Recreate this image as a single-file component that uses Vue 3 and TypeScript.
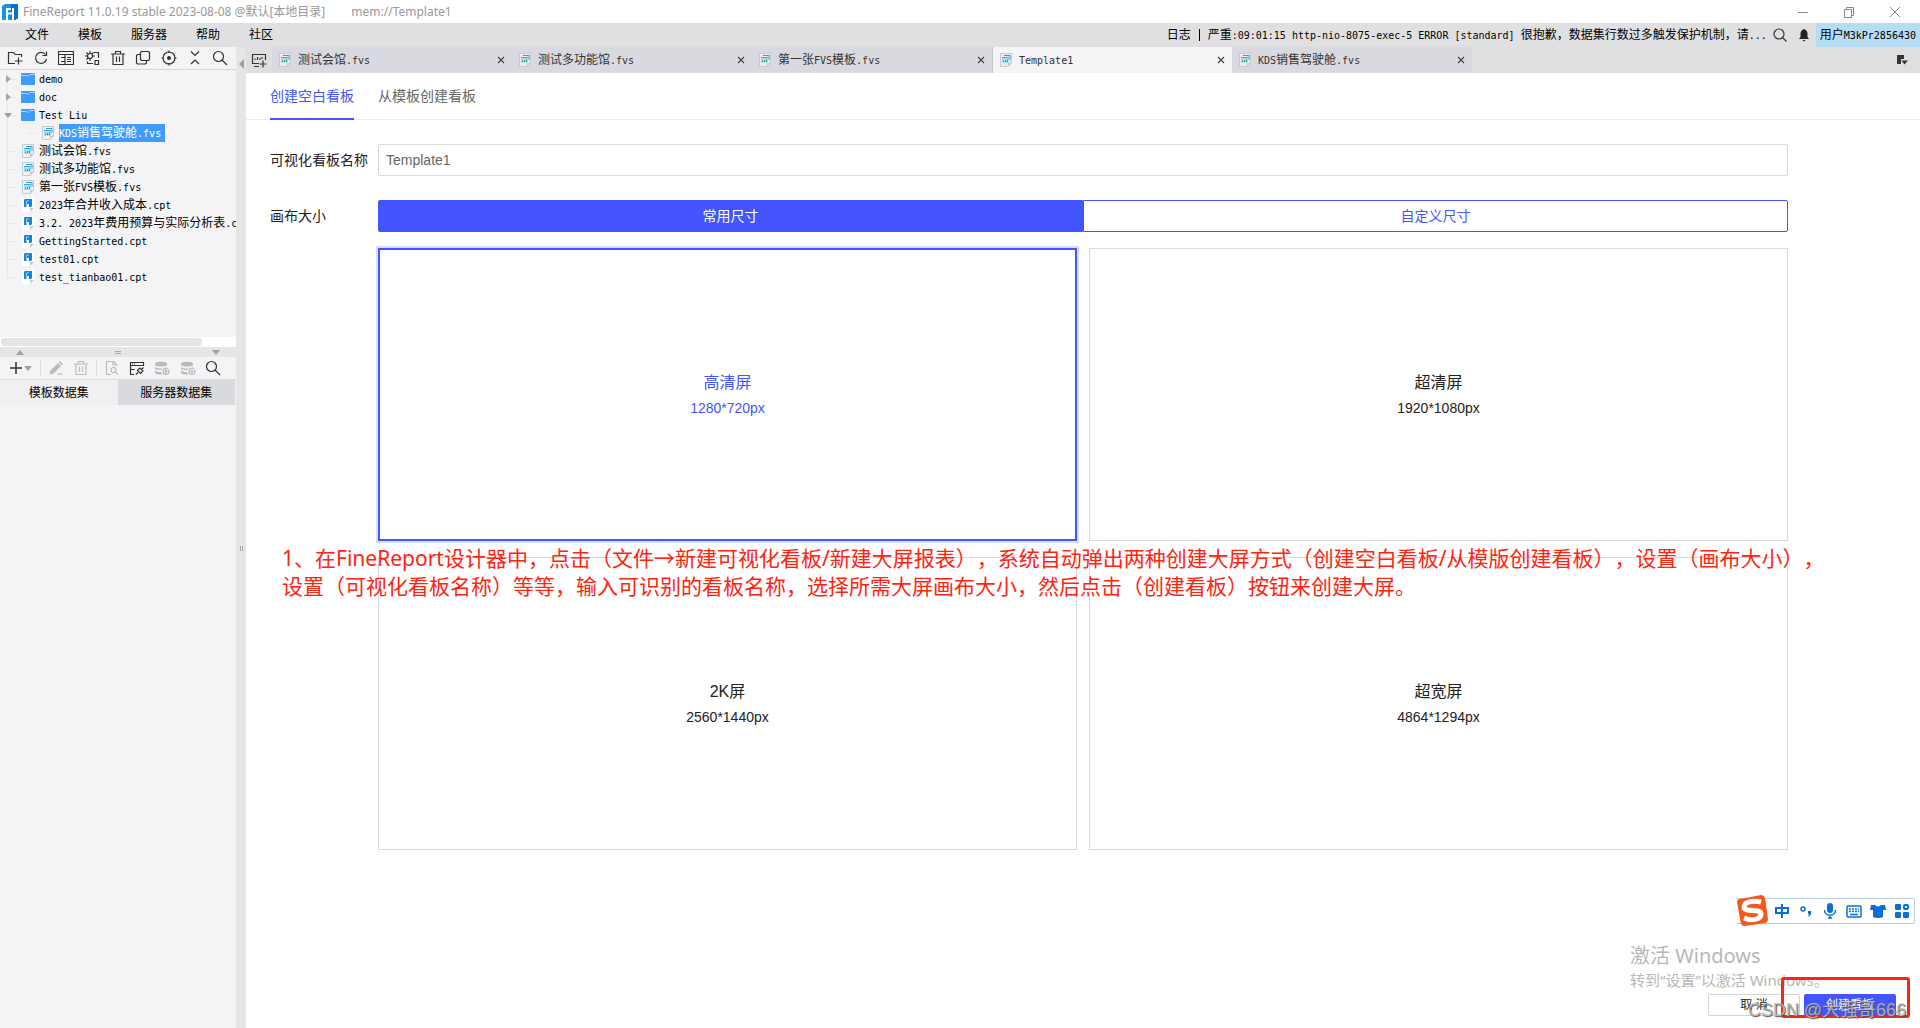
<script setup lang="ts">
import { h, ref, type FunctionalComponent } from 'vue'

// Mixed text: Latin runs are set in a monospace face half as wide as the Chinese glyphs.
const Mixed: FunctionalComponent<{ text: string }> = (props) =>
  h(
    'span',
    { class: 'mixed' },
    (props.text.match(/[\x00-\x7f]+|[^\x00-\x7f]+/g) ?? []).map((run) =>
      h('span', { class: run.charCodeAt(0) < 128 ? 'latin' : 'han' }, run),
    ),
  )
Mixed.props = ['text']

type Kind = 'folder' | 'fvs' | 'cpt'
interface Node { name: string; kind: Kind; level: number; open?: boolean }

const menus = ['文件', '模板', '服务器', '帮助', '社区']
const nodes: Node[] = [
  { name: 'demo', kind: 'folder', level: 0, open: false },
  { name: 'doc', kind: 'folder', level: 0, open: false },
  { name: 'Test Liu', kind: 'folder', level: 0, open: true },
  { name: 'KDS销售驾驶舱.fvs', kind: 'fvs', level: 1 },
  { name: '测试会馆.fvs', kind: 'fvs', level: 0 },
  { name: '测试多功能馆.fvs', kind: 'fvs', level: 0 },
  { name: '第一张FVS模板.fvs', kind: 'fvs', level: 0 },
  { name: '2023年合并收入成本.cpt', kind: 'cpt', level: 0 },
  { name: '3.2. 2023年费用预算与实际分析表.cpt', kind: 'cpt', level: 0 },
  { name: 'GettingStarted.cpt', kind: 'cpt', level: 0 },
  { name: 'test01.cpt', kind: 'cpt', level: 0 },
  { name: 'test_tianbao01.cpt', kind: 'cpt', level: 0 },
]
const selectedNode = ref('KDS销售驾驶舱.fvs')

const files = ['测试会馆.fvs', '测试多功能馆.fvs', '第一张FVS模板.fvs', 'Template1', 'KDS销售驾驶舱.fvs']
const activeFile = ref('Template1')

const boardName = ref('Template1')
const sizes = [
  { name: '高清屏', px: '1280*720px' },
  { name: '超清屏', px: '1920*1080px' },
  { name: '2K屏', px: '2560*1440px' },
  { name: '超宽屏', px: '4864*1294px' },
]
const size = ref('高清屏')

interface Tool { label: string; d: string; solid?: string; off?: boolean }

const tools: Tool[] = [
  { label: '新建文件夹', d: 'M8 13.500H1.500V2.500H6.500L8 4.500H14.500V7M11.500 7.500V14.500M8 11H15.500M8 4.500H14.500' },
  { label: '刷新', d: 'M12.500 4.500A5.500 5.500 0 1 0 13.500 9M13.500 1.500V5.500H9.500' },
  { label: '视图', d: 'M.5 1.500H15.500V14.500H.5ZM.5 4.500H15.500M3 7.500H7M3 11.500H7M7 5V14M9 7.500H13M9 9.500H13M9 11.500H13' },
  { label: '设置', d: 'M6 1V3M6 9V11M1 6H3M9 6H11M2.500 2.500L4 4M9.500 2.500L8 4M2.500 9.500L4 8M6 3.500A2.500 2.500 0 1 0 6 8.500A2.500 2.500 0 1 0 6 3.500M10 2.500H14.500V8M3.500 11.500V13.500H9M11 10.500H14.500V14.500H11Z' },
  { label: '删除', d: 'M1 4H15M5.500 4V1.500H10.500V4M3 4V14.500H13V4M6.500 6.500V12M9.500 6.500V12' },
  { label: '复制', d: 'M6.500 1.500H13.500L14.500 2.500V9.500L13.500 10.500H6.500L5.500 9.500V2.500ZM5 4.500H2.500L1.500 5.500V13L2.500 14H10.500L11.500 13V11' },
  { label: '定位', d: 'M8 2A6 6 0 1 0 8 14A6 6 0 1 0 8 2M8 .5V3M8 13V15.500M.5 8H3M13 8H15.500', solid: 'M8 6A2 2 0 1 0 8 10A2 2 0 1 0 8 6' },
  { label: '折叠', d: 'M4 1.500L8 5.500L12 1.500M4 14L8 10L12 14' },
  { label: '搜索', d: 'M6.500 1.500A5 5 0 1 0 6.500 11.500A5 5 0 1 0 6.500 1.500M10 10L15 15' },
]
const database = 'M1 3.500C1 1 13 1 13 3.500V5C13 7 1 7 1 5ZM1 7C3 9 11 9 13 7V8H9L7 10C4 10 1 9.500 1 8.500ZM1 10.500C2 11.500 5 12 7 12L8 14.500C4 14.500 1 14 1 12.500Z'
const dataTools: Tool[] = [
  { label: '编辑', off: true, solid: 'M1.500 14.500L2.500 10.500L10 3L13 6L5.500 13.500ZM10.800 2.200L12 1L15 4L13.800 5.200Z', d: 'M9 14H14.500' },
  { label: '删除数据集', off: true, d: 'M1 4H15M5.500 4V1.500H10.500V4M3 4V14.500H13V4M6.500 6.500V12M9.500 6.500V12' },
  { label: '预览', off: true, d: 'M7 14.500H2.500V1.500H9.500L12.500 4.500V6M9 1.500V5H12.500M9.500 7.500A2.500 2.500 0 1 0 9.500 12.500A2.500 2.500 0 1 0 9.500 7.500M11.500 12L14 14.500' },
  { label: '连接', d: 'M5 14.500H1.500V2.500H14.500V6M1.500 5.500H14.500M3 4H4M5 4H6M1.500 9.500H5.500M7 14.500L9 12.500M8.500 10.500L11 8L14 11L11.500 13.500ZM12.500 9.500L14.500 7.500' },
  { label: '运行', off: true, solid: database, d: 'M12 8.500A3 3 0 1 0 12 14.500A3 3 0 1 0 12 8.500M11.500 10V13L13 11.500Z' },
  { label: '停止', off: true, solid: database, d: 'M12 8.500A3 3 0 1 0 12 14.500A3 3 0 1 0 12 8.500M11 10.500L13 12.500M13 10.500L11 12.500' },
  { label: '查找', d: 'M6.500 1.500A5 5 0 1 0 6.500 11.500A5 5 0 1 0 6.500 1.500M10 10L15 15' },
]
</script>

<template>
  <div class="app">
    <header class="titlebar">
      <svg class="logo" viewBox="0 0 16 16" aria-hidden="true">
        <path d="M0 2L3 0H16V14L13 16H0Z" fill="#1593e6" />
        <path d="M9 0H16V14L13 16H9Z" fill="#0a6fc4" />
        <path d="M5 16V5H9M5 9.500H11M11 4V16" fill="none" stroke="#fff" stroke-width="2" />
      </svg>
      <span class="title">FineReport 11.0.19 stable 2023-08-08 @默认[本地目录]</span>
      <span class="title">mem://Template1</span>
      <div class="window-buttons">
        <button aria-label="最小化"><svg viewBox="0 0 12 12"><path d="M1 6.500H11" /></svg></button>
        <button aria-label="还原"><svg viewBox="0 0 12 12"><path d="M1.500 3.500H8.500V11.500H1.500ZM3.500 3V1.500H10.500V9.500H9" /></svg></button>
        <button aria-label="关闭"><svg viewBox="0 0 12 12"><path d="M1 1L11 11M11 1L1 11" /></svg></button>
      </div>
    </header>

    <div class="menubar">
      <nav class="menus">
        <button v-for="m in menus" :key="m">{{ m }}</button>
      </nav>
      <div class="status">
        <span>日志</span>
        <span class="bar"></span>
        <Mixed class="log" text="严重:09:01:15 http-nio-8075-exec-5 ERROR [standard] 很抱歉，数据集行数过多触发保护机制，请..." />
        <button class="plain" aria-label="搜索">
          <svg class="icon" viewBox="0 0 16 16"><path d="M7 2A5 5 0 1 0 7 12A5 5 0 1 0 7 2M10.500 10.500L14.500 14.500" /></svg>
        </button>
        <button class="plain" aria-label="通知">
          <svg class="icon bell" viewBox="0 0 16 16"><path d="M8 2C5 3 4.500 5 4.500 7V10L3 12H13L11.500 10V7C11.500 5 11 3 8 2ZM6.500 13H9.500L8 14.500Z" /></svg>
        </button>
        <button class="user"><Mixed text="用户M3kPr2856430" /></button>
      </div>
    </div>

    <div class="body">
      <aside class="side">
        <div class="tools">
          <button v-for="t in tools" :key="t.label" :aria-label="t.label">
            <svg class="icon" viewBox="0 0 16 16"><path v-if="t.solid" class="solid" :d="t.solid" /><path :d="t.d" /></svg>
          </button>
        </div>
        <ul class="tree">
          <li v-for="n in nodes" :key="n.name" :class="['node', { child: n.level === 1 }]">
            <span class="toggle">
              <i v-if="n.kind === 'folder'" :class="n.open ? 'caret-down' : 'caret-right'"></i>
            </span>
            <svg v-if="n.kind === 'folder'" class="folder" viewBox="0 0 14 12" aria-hidden="true">
              <path d="M0 1Q0 0 1 0H13Q14 0 14 1V11Q14 12 13 12H1Q0 12 0 11Z" fill="#409bff" />
              <path d="M0 2.500H5L7 3.500L9 1.500H14" fill="none" stroke="#a9d2ff" />
            </svg>
            <svg v-else-if="n.kind === 'fvs'" class="file" viewBox="0 0 12 14" aria-hidden="true">
              <path d="M.5 .5H11.500V10L8 13.500H.5Z" fill="#f2f3f5" stroke="#c6c9cd" />
              <path d="M4 2.500H10V7" fill="none" stroke="#2f9be0" />
              <path d="M2 4H9V10H2Z" fill="#a9dcf7" /><path d="M2 4H9V5H2Z" fill="#3fa5e6" />
              <path d="M3.500 9V7.500M5.500 9V7M7.500 9V6.500" stroke="#3aa55a" />
              <path d="M8 13.500V10H11.500Z" fill="#c6c9cd" />
            </svg>
            <svg v-else class="file" viewBox="0 0 12 14" aria-hidden="true">
              <path d="M0 0H12V10L8 14H0Z" fill="#fff" />
              <path d="M2 2L3 1H10V8L9 9H7V6H5V9H2Z" fill="#1286dd" />
              <path d="M7 3H4.500V9" fill="none" stroke="#8ed0ff" />
              <path d="M8 14V10H12Z" fill="#c9ccd0" />
            </svg>
            <button :class="['node-name', { on: selectedNode === n.name }]" @click="selectedNode = n.name">
              <Mixed :text="n.name" />
            </button>
          </li>
        </ul>
        <div class="hscroll"><div class="thumb"></div></div>
        <div class="hsplit">
          <i class="caret-up"></i><span class="grip"></span><i class="caret-down"></i>
        </div>
        <div class="tools data-tools">
          <button class="add" aria-label="新增">
            <svg class="icon" viewBox="0 0 16 16"><path d="M8 2V14M2 8H14" stroke-width="1.500" /></svg><i class="caret-down"></i>
          </button>
          <template v-for="(t, i) in dataTools" :key="t.label">
            <span v-if="i === 0 || i === 2" class="sep"></span>
            <button :aria-label="t.label" :class="{ off: t.off }">
              <svg class="icon" viewBox="0 0 16 16"><path v-if="t.solid" class="solid" :d="t.solid" /><path :d="t.d" /></svg>
            </button>
          </template>
        </div>
        <div class="data-tabs">
          <button>模板数据集</button>
          <button class="on">服务器数据集</button>
        </div>
      </aside>

      <div class="vsplit">
        <i class="caret-left"></i><span class="vgrip"></span>
      </div>

      <main class="main">
        <div class="file-tabs">
          <button class="plain new-board" aria-label="新建看板">
            <svg class="icon" viewBox="0 0 16 16"><path d="M8 11.500H1.500V2.500H14.500V8M12 8.500V15.500M8.500 12H15.500M3 14.500H8M4 8V6.500M6.500 8V5M9 8V6M11 7V5" /></svg>
          </button>
          <div v-for="f in files" :key="f" :class="['file-tab', { on: activeFile === f }]">
            <button class="file-tab-name" @click="activeFile = f">
              <svg class="file" viewBox="0 0 12 14" aria-hidden="true">
                <path d="M.5 .5H11.500V10L8 13.500H.5Z" fill="#e9ebee" stroke="#c6c9cd" />
                <path d="M4 2.500H10V7" fill="none" stroke="#2f9be0" />
                <path d="M2 4H9V10H2Z" fill="#a9dcf7" /><path d="M2 4H9V5H2Z" fill="#3fa5e6" />
                <path d="M3.500 9V7.500M5.500 9V7M7.500 9V6.500" stroke="#3aa55a" />
                <path d="M8 13.500V10H11.500Z" fill="#c6c9cd" />
              </svg>
              <Mixed :text="f" />
            </button>
            <button class="close" aria-label="关闭标签">
              <svg viewBox="0 0 8 8"><path d="M1 1L7 7M7 1L1 7" /></svg>
            </button>
          </div>
          <button class="plain more" aria-label="更多标签">
            <svg viewBox="0 0 12 12"><path d="M1 10V1H8V5H5V10Z" fill="#333" /><path d="M5.500 6.500H12L8.500 10.500Z" fill="#333" /></svg>
          </button>
        </div>

        <nav class="mode-tabs">
          <button class="on">创建空白看板</button>
          <button>从模板创建看板</button>
        </nav>

        <form class="form" @submit.prevent>
          <div class="row">
            <label for="board-name">可视化看板名称</label>
            <input id="board-name" v-model="boardName" type="text" />
          </div>
          <div class="row">
            <span id="canvas-label" class="label">画布大小</span>
            <div class="segments" role="group" aria-labelledby="canvas-label">
              <button type="button" class="on">常用尺寸</button>
              <button type="button">自定义尺寸</button>
            </div>
          </div>
          <div class="cards">
            <button v-for="s in sizes" :key="s.name" type="button" :class="['card', { on: size === s.name }]" @click="size = s.name">
              <span class="card-name">{{ s.name }}</span>
              <span class="card-px">{{ s.px }}</span>
            </button>
          </div>
        </form>

        <footer class="footer">
          <button>取 消</button>
          <button class="primary">创建看板</button>
        </footer>

        <p class="note">
          1、在FineReport设计器中，点击（文件→新建可视化看板/新建大屏报表），系统自动弹出两种创建大屏方式（创建空白看板/从模版创建看板），设置（画布大小），<br />
          设置（可视化看板名称）等等，输入可识别的看板名称，选择所需大屏画布大小，然后点击（创建看板）按钮来创建大屏。
        </p>
      </main>
    </div>

    <div class="activate">
      <div class="activate-title">激活 Windows</div>
      <div>转到“设置”以激活 Windows。</div>
    </div>

    <div class="ime">
      <svg class="sogou" viewBox="0 0 32 32" aria-hidden="true">
        <path d="M1 7Q1 4 4 4L25 0Q28 0 29 3L32 24Q32 27 29 28L9 31Q6 31 5 29Z" fill="#f4581c" />
        <path d="M25 7C16 5 8 7 8 12C8 18 25 13 25 19C25 25 15 26 8 23" fill="none" stroke="#fff" stroke-width="5" />
      </svg>
      <svg viewBox="0 0 16 16" aria-label="中文"><path d="M2 5H14V10H2ZM8 1V15" fill="none" stroke="#0a6fd8" stroke-width="2" /></svg>
      <svg viewBox="0 0 16 16" aria-label="标点"><circle cx="5" cy="6" r="2" fill="none" stroke="#0a6fd8" stroke-width="1.500" /><path d="M10 8H13V11L11 13.500H10L11 11H10Z" fill="#0a6fd8" /></svg>
      <svg viewBox="0 0 16 16" aria-label="语音"><rect x="5" y="0" width="6" height="10" rx="3" fill="#0a6fd8" /><path d="M2.500 7C2.500 14 13.500 14 13.500 7M8 12V15.500M6 15H10" fill="none" stroke="#0a6fd8" stroke-width="1.500" /></svg>
      <svg viewBox="0 0 16 16" aria-label="键盘"><rect x="1" y="3" width="14" height="11" rx="1" fill="none" stroke="#0a6fd8" stroke-width="1.500" /><path d="M3 6H13M3 8.500H13" stroke="#0a6fd8" stroke-width="1.500" stroke-dasharray="2 1" /><path d="M4 11.500H12" stroke="#0a6fd8" stroke-width="1.500" /></svg>
      <svg viewBox="0 0 16 16" aria-label="皮肤"><path d="M1 2H5Q8 5 11 2H15L16 7H13V14Q8 16 3 14V7H0Z" fill="#0a6fd8" /></svg>
      <svg viewBox="0 0 16 16" aria-label="工具箱"><path d="M2 2H6V6H2ZM2 10H6V14H2ZM10 10H14V14H10Z" fill="#0a6fd8" stroke="#0a6fd8" stroke-width="2" stroke-linejoin="round" /><rect x="10" y="2" width="4" height="4" rx="1" fill="none" stroke="#0a6fd8" stroke-width="2" /></svg>
    </div>

    <div class="highlight"></div>
    <div class="watermark">CSDN @大强哥666</div>
  </div>
</template>

<style>
body {
  margin: 0;
}
.mixed {
  white-space: pre;
}
.mixed .latin {
  font-family: 'DejaVu Sans Mono', monospace;
  font-size: 10px;
}
</style>

<style scoped>
.app {
  position: relative;
  display: flex;
  flex-direction: column;
  min-height: 100vh;
  overflow: hidden;
  background: #fff;
  color: #000;
  font: 12px/18px 'Liberation Sans', 'Noto Sans CJK SC', sans-serif;
}
button {
  margin: 0;
  padding: 0;
  border: 0;
  background: none;
  color: inherit;
  font: inherit;
  cursor: pointer;
}
svg {
  display: block;
  flex: none;
}
.icon {
  width: 16px;
  height: 16px;
  fill: none;
  stroke: #333;
  stroke-width: 1.2;
}
.icon .solid {
  fill: #333;
  stroke: none;
}
.plain {
  display: flex;
  align-items: center;
  justify-content: center;
}

.titlebar {
  display: flex;
  align-items: center;
  height: 23px;
  padding: 0 2px;
  color: #999;
  font-family: 'Noto Sans', 'Noto Sans CJK SC', sans-serif;
}
.logo {
  width: 16px;
  height: 16px;
  margin-right: 5px;
}
.title {
  margin-right: 26px;
}
.window-buttons {
  display: flex;
  margin-left: auto;
}
.window-buttons button {
  display: flex;
  align-items: center;
  justify-content: center;
  width: 46px;
  height: 20px;
}
.window-buttons svg {
  width: 12px;
  height: 12px;
  fill: none;
  stroke: #888;
}

.menubar {
  display: flex;
  justify-content: space-between;
  height: 24px;
  background: #e0e0e2;
}
.menus {
  display: flex;
  gap: 29px;
  padding-left: 25px;
}
.status {
  display: flex;
  align-items: center;
}
.bar {
  width: 1px;
  height: 12px;
  margin: 0 8px;
  background: #000;
}
.log {
  margin-right: 1px;
}
.status .plain {
  width: 24px;
}
.bell {
  fill: #222;
  stroke: none;
}
.user {
  height: 24px;
  padding: 0 4px;
  background: #b6dcf3;
}

.body {
  display: flex;
  flex: 1;
}
.side {
  display: flex;
  flex-direction: column;
  width: 236px;
  flex: none;
  background: #f4f4f7;
}
.tools {
  display: flex;
  align-items: center;
  box-sizing: border-box;
  height: 23px;
  padding: 0 3px 0 2px;
  border-bottom: 1px solid #d8d8dc;
}
.tools button {
  display: flex;
  flex: 1;
  align-items: center;
  justify-content: center;
}
.tree {
  position: relative;
  height: 267px;
  margin: 0;
  padding: 0;
  overflow: hidden;
  list-style: none;
}
.tree::before {
  content: '';
  position: absolute;
  left: 7px;
  width: 1px;
  height: 208px;
  background: #e8e8eb;
}
.node {
  position: relative;
  display: flex;
  align-items: center;
  height: 18px;
}
.child {
  padding-left: 20px;
}
.toggle {
  position: relative;
  display: flex;
  flex: none;
  align-items: center;
  justify-content: center;
  width: 10px;
  height: 18px;
  margin: 0 7px 0 3px;
}
.toggle::before {
  content: '';
  position: absolute;
  top: 9px;
  left: 5px;
  width: 8px;
  height: 1px;
  background: #e8e8eb;
}
.toggle i {
  position: relative;
}
.caret-right,
.caret-left,
.caret-up,
.caret-down {
  width: 0;
  height: 0;
  border: 4px solid transparent;
}
.caret-right {
  border-width: 4px 0 4px 5px;
  border-left-color: #a8a8a8;
}
.caret-left {
  border-width: 5px 5px 5px 0;
  border-right-color: #a0a0a0;
}
.caret-up {
  border-width: 0 4px 5px;
  border-bottom-color: #a0a0a0;
}
.caret-down {
  border-width: 5px 4px 0;
  border-top-color: #a0a0a0;
}
.folder {
  width: 14px;
  height: 12px;
  margin: 0 4px 0 1px;
}
.file {
  width: 12px;
  height: 14px;
  margin: 0 5px 0 2px;
}
.node-name {
  height: 18px;
  flex: none;
  padding: 0 1px 0 0;
  line-height: 18px;
}
.node-name.on {
  padding-right: 4px;
  background: #409bff;
  color: #fff;
}
.hscroll {
  height: 10px;
  background: #fff;
}
.thumb {
  width: 85%;
  height: 8px;
  margin: 1px;
  border-radius: 3px;
  background: #e5e5e5;
}
.hsplit {
  display: flex;
  align-items: center;
  justify-content: space-between;
  height: 10px;
  padding: 0 16px;
  background: #e6e6e6;
}
.grip {
  width: 6px;
  height: 1px;
  border-top: 1px solid #a8a8a8;
  border-bottom: 1px solid #a8a8a8;
}
.data-tools {
  padding-right: 10px;
}
.data-tools .add {
  width: 32px;
  flex: none;
  margin: 0 2px;
}
.sep {
  width: 1px;
  height: 16px;
  margin: 0 2px;
  background: #dcdcde;
}
.off .icon {
  stroke: #bbb;
}
.off .solid {
  fill: #bbb;
}
.data-tabs {
  display: flex;
}
.data-tabs button {
  flex: 1;
  height: 25px;
  background: #f0f0f2;
}
.data-tabs .on {
  margin-right: 1px;
  background: #d8dade;
}

.vsplit {
  display: flex;
  flex-direction: column;
  align-items: center;
  width: 10px;
  flex: none;
  padding-top: 12px;
  background: #e6e6e6;
}
.vgrip {
  width: 1px;
  height: 5px;
  margin-top: 477px;
  border-right: 1px solid #a8a8a8;
  border-left: 1px solid #a8a8a8;
}

.main {
  position: relative;
  display: flex;
  flex: 1;
  flex-direction: column;
  min-width: 0;
}
.file-tabs {
  display: flex;
  height: 26px;
  background: #dfdfe2;
}
.new-board {
  width: 26px;
}
.file-tab {
  display: flex;
  align-items: center;
  justify-content: space-between;
  box-sizing: border-box;
  width: 240px;
  padding: 0 7px 0 5px;
  background: #d9dadf;
  color: #333;
}
.file-tab.on {
  border-left: 1px solid #c4c5ca;
  background: #f4f4f7;
}
.file-tab-name {
  display: flex;
  align-items: center;
}
.file-tab .file {
  margin-right: 7px;
}
.close svg {
  width: 8px;
  height: 8px;
  stroke: #444;
  stroke-width: 1.2;
}
.more {
  margin: 0 12px 0 auto;
}
.more svg {
  width: 12px;
  height: 12px;
}

.mode-tabs {
  display: flex;
  gap: 24px;
  height: 46px;
  padding-left: 24px;
  border-bottom: 1px solid #ececec;
  color: #666;
  font-size: 14px;
}
.mode-tabs button {
  height: 47px;
  border-bottom: 2px solid transparent;
}
.mode-tabs .on {
  border-bottom-color: #4355ff;
  color: #4355ff;
}
.form {
  display: flex;
  flex-direction: column;
  padding: 24px 132px 0 24px;
  font-size: 14px;
}
.row {
  display: flex;
  align-items: center;
  height: 32px;
  margin-bottom: 24px;
}
.row:nth-child(2) {
  margin-bottom: 16px;
}
.row label,
.label {
  width: 108px;
  flex: none;
  color: #222;
}
.row input {
  box-sizing: border-box;
  width: 100%;
  height: 32px;
  padding: 0 7px;
  border: 1px solid #d9d9d9;
  border-radius: 2px;
  color: #666;
  font: inherit;
}
.segments {
  display: flex;
  flex: 1;
}
.segments button {
  flex: 1;
  height: 32px;
  border: 1px solid #4355ff;
  border-radius: 0 2px 2px 0;
  color: #4355ff;
}
.segments .on {
  border-radius: 2px 0 0 2px;
  background: #4355ff;
  color: #fff;
}
.cards {
  display: grid;
  grid-template-columns: 1fr 1fr;
  grid-auto-rows: 293px;
  gap: 16px 12px;
  margin-left: 108px;
}
.card {
  display: flex;
  flex-direction: column;
  align-items: center;
  justify-content: center;
  gap: 2px;
  border: 1px solid #d9d9d9;
  color: #222;
}
.card.on {
  border: 2px solid #4355ff;
  box-shadow: 0 0 0 2px #d9ddff;
  color: #4355ff;
}
.card-name {
  font-size: 16px;
  line-height: 24px;
}
.card-px {
  line-height: 22px;
}
.footer {
  display: flex;
  gap: 4px;
  justify-content: flex-end;
  margin-top: auto;
  padding: 12px 24px;
}
.footer button {
  width: 92px;
  height: 22px;
  border: 1px solid #d4d4d4;
  border-radius: 2px;
  color: #222;
}
.footer .primary {
  border-color: #4355ff;
  background: #4355ff;
  color: #fff;
}

.note {
  position: absolute;
  top: 497px;
  left: 36px;
  margin: 0;
  color: #ff2412;
  font: 21px/28px 'Noto Sans', 'Noto Sans CJK SC', sans-serif;
  text-spacing-trim: space-all;
  white-space: nowrap;
}
.activate {
  position: absolute;
  right: 90px;
  bottom: 37px;
  width: 200px;
  color: #b8b8b8;
  font: 15px/22px 'Noto Sans', 'Noto Sans CJK SC', sans-serif;
  white-space: nowrap;
}
.activate-title {
  font-size: 20px;
  line-height: 26px;
}
.ime {
  position: absolute;
  right: 5px;
  bottom: 104px;
  display: flex;
  align-items: center;
  gap: 8px;
  box-sizing: border-box;
  height: 26px;
  padding-right: 4px;
  border: 1px solid #b4cbea;
  border-left: 0;
  border-radius: 2px;
  background: #fff;
}
.ime svg {
  width: 16px;
  height: 16px;
}
.ime .sogou {
  width: 32px;
  height: 32px;
  margin-right: -2px;
}
.highlight {
  position: absolute;
  right: 10px;
  bottom: 10px;
  box-sizing: border-box;
  width: 129px;
  height: 41px;
  border: 3px solid #ff2412;
  border-radius: 3px;
}
.watermark {
  position: absolute;
  right: 14px;
  bottom: 4px;
  color: rgba(190, 190, 190, 0.85);
  font-size: 18px;
  line-height: 28px;
  text-shadow: 1px 1px 1px #555;
}
</style>
